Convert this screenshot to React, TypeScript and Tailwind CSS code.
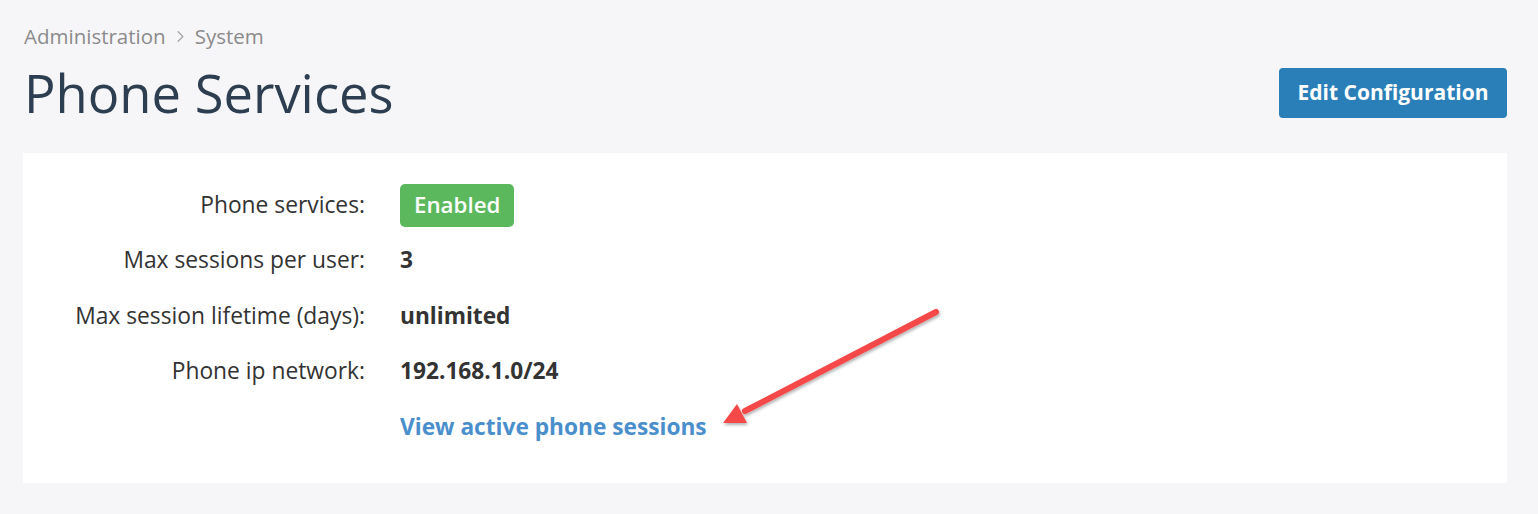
import { ChevronRight } from "lucide-react";

const rows = [
    { label: "Phone services:", value: "Enabled", type: "badge" },
    { label: "Max sessions per user:", value: "3", type: "text" },
    { label: "Max session lifetime (days):", value: "unlimited", type: "text" },
    { label: "Phone ip network:", value: "192.168.1.0/24", type: "text" },
];

const Arrow = () => {
    return (
        <svg className="absolute left-0 top-0 pointer-events-none" width="1538" height="514" viewBox="0 0 1538 514">
            <defs>
                <filter id="shadow" x="-20%" y="-20%" width="140%" height="140%">
                    <feDropShadow dx="1" dy="2" stdDeviation="1.5" floodColor="#000" floodOpacity="0.3" />
                </filter>
            </defs>
            <g filter="url(#shadow)">
                <line x1="936" y1="312" x2="745" y2="411" stroke="#f54a4a" strokeWidth="6" strokeLinecap="round" />
                <polygon points="723,423 737,404 747,423" fill="#f54a4a" />
            </g>
        </svg>
    );
};

export default function App() {
    return (
        <div className="relative min-h-screen bg-[#f6f6f8] pl-[23px] pr-[31px] pt-[21px]" style={{ fontFamily: '"Open Sans", sans-serif' }}>
            <div className="flex items-center text-[20.5px] text-[#8b8b8b] pl-[1px]">
                <span>Administration</span>
                <ChevronRight className="mx-[5px] text-[#a4a4a4]" size={19} strokeWidth={1.6} />
                <span>System</span>
            </div>

            <div className="flex items-start justify-between mt-[6px]">
                <h1 className="text-[52.5px] leading-[70px] text-[#2c3e50] pl-[1px]">Phone Services</h1>
                <button className="mt-[10px] h-[50px] w-[228px] rounded-[4px] bg-[#2a7fb8] text-[21px] font-bold text-white">
                    Edit Configuration
                </button>
            </div>

            <div className="mt-[25px] bg-white pt-[31px] pb-[35px]">
                <div className="flex flex-col gap-[13px]">
                    {rows.map((row) => (
                        <div key={row.label} className="flex items-center h-[42.5px]">
                            <div className="w-[342px] text-right text-[22.8px] text-[#333]">{row.label}</div>
                            <div className="ml-[35px]">
                                {row.type === "badge" ? (
                                    <span className="inline-flex h-[43px] items-center rounded-[5px] bg-[#5cb85c] px-[14px] text-[22.3px] font-semibold text-white">
                                        {row.value}
                                    </span>
                                ) : (
                                    <span className="text-[22.7px] font-bold text-[#333]">{row.value}</span>
                                )}
                            </div>
                        </div>
                    ))}
                    <div className="flex items-center h-[42.5px]">
                        <div className="w-[342px]"></div>
                        <a href="#" className="ml-[35px] text-[22.7px] font-bold text-[#4a8fcc]">View active phone sessions</a>
                    </div>
                </div>
            </div>

            <Arrow />
        </div>
    );
}
